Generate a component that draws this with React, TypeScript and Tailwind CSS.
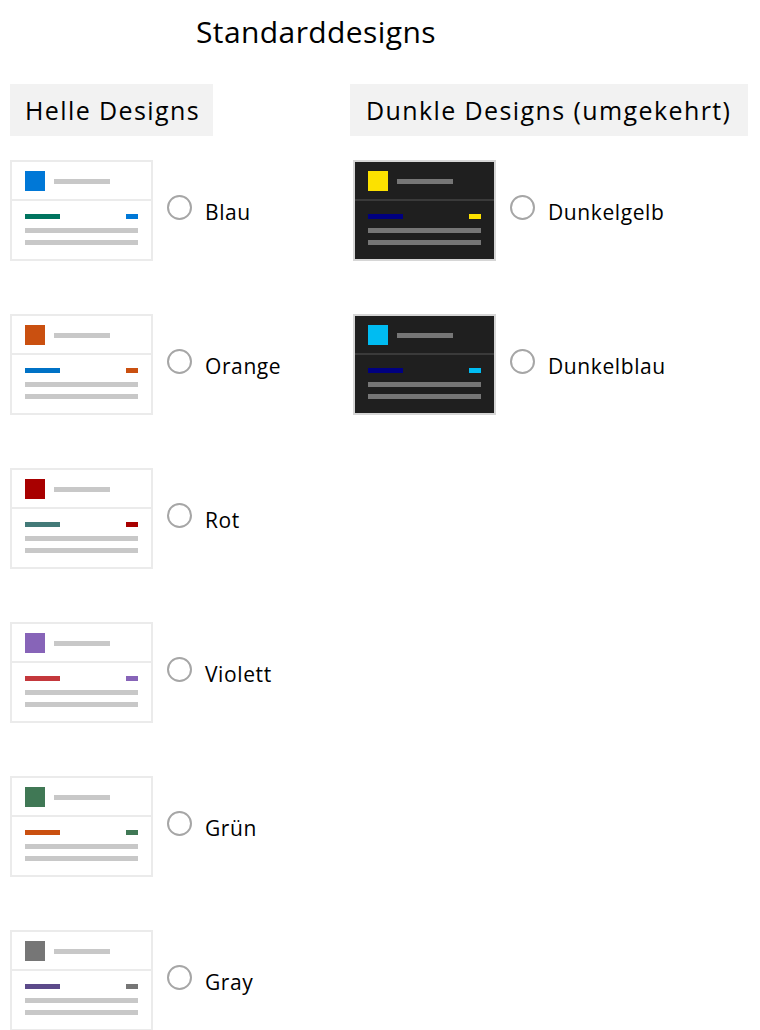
import React from 'react';

interface Theme {
  name: string;
  accent: string;
  bar: string;
}

const lightThemes: Theme[] = [
  { name: 'Blau', accent: 'bg-[#0078d7]', bar: 'bg-[#00745f]' },
  { name: 'Orange', accent: 'bg-[#ca5010]', bar: 'bg-[#0072c6]' },
  { name: 'Rot', accent: 'bg-[#a80000]', bar: 'bg-[#437a78]' },
  { name: 'Violett', accent: 'bg-[#8764b8]', bar: 'bg-[#c4383c]' },
  { name: 'Grün', accent: 'bg-[#407855]', bar: 'bg-[#ca5010]' },
  { name: 'Gray', accent: 'bg-[#767676]', bar: 'bg-[#5c4a8a]' },
];

const darkThemes: Theme[] = [
  { name: 'Dunkelgelb', accent: 'bg-[#fce100]', bar: 'bg-[#000080]' },
  { name: 'Dunkelblau', accent: 'bg-[#00bcf2]', bar: 'bg-[#000080]' },
];

function Preview({ theme, dark }: { theme: Theme; dark?: boolean }) {
  const line = dark ? 'bg-[#767676]' : 'bg-[#c8c8c8]';
  return (
    <div
      className={
        dark
          ? 'w-[143px] h-[101px] border-2 border-[#d6d6d6] bg-[#1f1f1f] flex flex-col'
          : 'w-[143px] h-[101px] border-2 border-[#ebebeb] bg-white flex flex-col'
      }
    >
      {/* Header */}
      <div className="flex items-center gap-[9px] px-[13px] pt-[9px] pb-[8px]">
        <div className={`w-[20px] h-[20px] ${theme.accent}`} />
        <div className={`w-[56px] h-[5px] ${line}`} />
      </div>
      <div className={dark ? 'h-[2px] bg-[#3a3a3a]' : 'h-[2px] bg-[#ebebeb]'} />

      {/* Body */}
      <div className="flex flex-col px-[13px] pt-[13px]">
        <div className="flex items-center justify-between">
          <div className={`w-[35px] h-[5px] ${theme.bar}`} />
          <div className={`w-[12px] h-[5px] ${theme.accent}`} />
        </div>
        <div className={`mt-[9px] h-[5px] ${line}`} />
        <div className={`mt-[7px] h-[5px] ${line}`} />
      </div>
    </div>
  );
}

function ThemeRow({ theme, dark }: { theme: Theme; dark?: boolean }) {
  return (
    <div className="flex items-center h-[101px]">
      <Preview theme={theme} dark={dark} />
      <div className="ml-[14px] mb-[6px] w-[25px] h-[25px] rounded-full border-2 border-[#a6a6a6] bg-white" />
      <span className="ml-[13px] mt-[3px] text-[21px] tracking-[0.6px] text-black leading-none">
        {theme.name}
      </span>
    </div>
  );
}

export default function App() {
  return (
    <div
      className="w-[760px] h-[1030px] bg-white overflow-hidden"
      style={{ fontFamily: '"Open Sans", "Noto Sans", sans-serif' }}
    >
      <h1 className="pl-[196px] pt-[12px] text-[30px] leading-[40px] tracking-[0.4px] text-black font-normal">
        Standarddesigns
      </h1>

      <div className="grid grid-cols-[340px_1fr] pl-[10px] mt-[32px]">
        {/* Light */}
        <div className="flex flex-col">
          <div className="w-[203px] h-[52px] bg-[#f2f2f2] flex items-center pl-[15px]">
            <span className="text-[25px] tracking-[1.4px] text-black leading-none">Helle Designs</span>
          </div>
          <div className="flex flex-col gap-[53px] mt-[24px]">
            {lightThemes.map((t) => (
              <ThemeRow key={t.name} theme={t} />
            ))}
          </div>
        </div>

        {/* Dark */}
        <div className="flex flex-col">
          <div className="w-[398px] h-[52px] bg-[#f2f2f2] flex items-center pl-[16px]">
            <span className="text-[25px] tracking-[1.4px] text-black leading-none">
              Dunkle Designs (umgekehrt)
            </span>
          </div>
          <div className="flex flex-col gap-[53px] mt-[24px] pl-[3px]">
            {darkThemes.map((t) => (
              <ThemeRow key={t.name} theme={t} dark />
            ))}
          </div>
        </div>
      </div>
    </div>
  );
}
